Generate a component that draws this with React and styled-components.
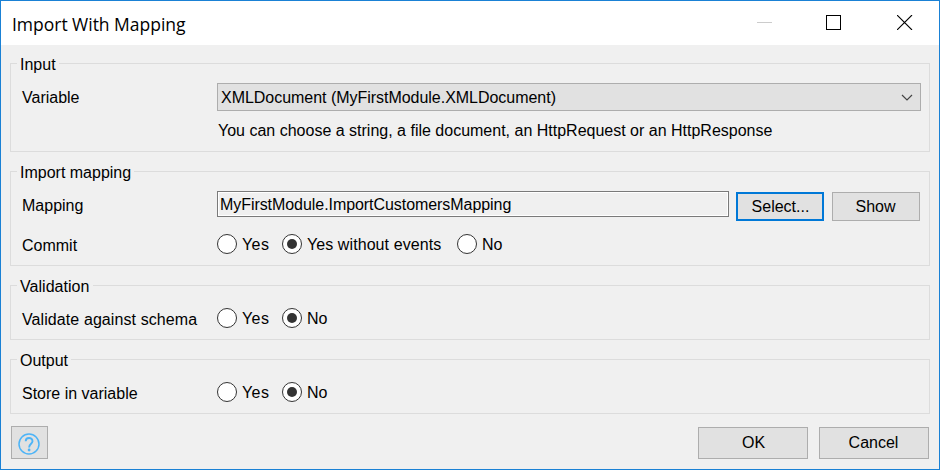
import React from "react";
import styled, { createGlobalStyle } from "styled-components";

const GlobalStyle = createGlobalStyle`
  * { box-sizing: border-box; }
  body { margin: 0; }
`;

const Window = styled.div`
  display: flex;
  flex-direction: column;
  width: 940px;
  height: 470px;
  border: 1px solid #1a81d5;
  background: #f0f0f0;
  color: #000;
  font: 16px/20px "Liberation Sans", Arial, sans-serif;
  white-space: nowrap;
`;

const TitleBar = styled.header`
  display: flex;
  align-items: center;
  justify-content: space-between;
  height: 44px;
  padding: 0 26px 0 11px;
  background: #fff;
`;

const Title = styled.h1`
  margin: 1px 0 0;
  font: 400 17.5px/24px "Open Sans", "Segoe UI", sans-serif;
  letter-spacing: -0.02px;
`;

const WindowControls = styled.div`
  display: flex;
  gap: 54px;
  margin-bottom: 1px;

  svg { display: block; }
  svg:last-child { margin-left: 2px; }
`;

const Body = styled.main`
  display: flex;
  flex-direction: column;
  gap: 19px;
  padding: 18px 9px 0;
`;

const Group = styled.section`
  height: ${(p) => p.$height}px;
  border: 1px solid #dcdcdc;
`;

const GroupTitle = styled.h2`
  width: fit-content;
  height: 20px;
  margin: -9px 0 0 6px;
  padding: 0 3px;
  background: #f0f0f0;
  font-size: 16px;
  font-weight: 400;
  letter-spacing: ${(p) => p.$spacing || 0}px;
`;

const Row = styled.div`
  display: grid;
  grid-template-columns: 195px 1fr;
  height: 29px;
  margin-top: ${(p) => p.$top || 0}px;
  padding: 0 8px 0 11px;
`;

const Label = styled.span`
  line-height: ${(p) => p.$line || 27}px;
  letter-spacing: ${(p) => p.$spacing || 0}px;
`;

const OptionText = styled.span`
  line-height: 22px;
  letter-spacing: ${(p) => p.$spacing || 0}px;
`;

const Select = styled.div`
  display: flex;
  align-items: center;
  justify-content: space-between;
  height: 28px;
  padding: 1px 7px 0 3px;
  border: 1px solid #adadad;
  background: #e1e1e1;
  line-height: 21px;
  letter-spacing: -0.03px;
`;

const Hint = styled.p`
  margin: 9px 0 0 207px;
`;

const FieldRow = styled.div`
  display: flex;
  align-items: flex-start;
  gap: 8px;
`;

const ReadOnlyField = styled.div`
  width: 512px;
  height: 26px;
  margin: -1px -1px 0 0;
  padding-left: 2px;
  border: 1px solid #7a7a7a;
  box-shadow: inset 0 0 0 1px #fff;
  line-height: 26px;
  letter-spacing: -0.06px;
`;

const Button = styled.button`
  display: flex;
  align-items: center;
  justify-content: center;
  width: ${(p) => p.$width}px;
  height: ${(p) => p.$height}px;
  padding: 0 1px 0 0;
  border: 1px solid #adadad;
  background: #e1e1e1;
  color: #000;
  font: inherit;
`;

const DefaultButton = styled(Button)`
  padding: 0 0 0 1px;
  border: 2px solid #0078d7;
`;

const OkButton = styled(Button)`
  padding: 0 0 0 1px;
`;

const HelpButton = styled(Button)`
  padding: 2px 2px 0 0;
`;

const Options = styled.div`
  display: flex;
  height: 20px;
  margin-top: ${(p) => p.$top}px;
`;

const Option = styled.label`
  display: flex;
  gap: 5px;
  width: ${(p) => p.$width}px;
`;

const RadioMark = styled.svg`
  flex: none;
  width: 20px;
  height: 20px;
`;

const Footer = styled.footer`
  display: flex;
  align-items: flex-end;
  gap: 11px;
  height: 45px;
  padding: 0 10px;
`;

const Spacer = styled.div`
  flex: 1;
`;

function Radio({ checked, width, spacing, children }) {
  return (
    <Option $width={width}>
      <RadioMark viewBox="0 0 20 20">
        <circle cx="10" cy="10" r="9.5" fill="#fff" stroke="#333" />
        {checked && <circle cx="10" cy="10" r="5" fill="#333" />}
      </RadioMark>
      <OptionText $spacing={spacing}>{children}</OptionText>
    </Option>
  );
}

export default function App() {
  return (
    <>
      <GlobalStyle />
      <Window>
        <TitleBar>
          <Title>Import With Mapping</Title>
          <WindowControls>
            <svg width="15" height="15" shapeRendering="crispEdges">
              <path d="M0 7.5H15" stroke="#ccc" />
            </svg>
            <svg width="15" height="15" shapeRendering="crispEdges">
              <rect x=".5" y=".5" width="14" height="14" fill="none" stroke="#000" />
            </svg>
            <svg width="16" height="15">
              <path d="M0 0L15 15M15 0L0 15" stroke="#000" strokeWidth="1.1" />
            </svg>
          </WindowControls>
        </TitleBar>
        <Body>
          <Group $height={89}>
            <GroupTitle>Input</GroupTitle>
            <Row $top={8}>
              <Label $line={29}>Variable</Label>
              <Select>
                XMLDocument (MyFirstModule.XMLDocument)
                <svg width="12" height="8" viewBox="0 0 12 8">
                  <path d="M1 1L6 6L11 1" fill="none" stroke="#444" strokeWidth="1.2" />
                </svg>
              </Select>
            </Row>
            <Hint>You can choose a string, a file document, an HttpRequest or an HttpResponse</Hint>
          </Group>
          <Group $height={95}>
            <GroupTitle>Import mapping</GroupTitle>
            <Row $top={9}>
              <Label>Mapping</Label>
              <FieldRow>
                <ReadOnlyField>MyFirstModule.ImportCustomersMapping</ReadOnlyField>
                <DefaultButton $width={88} $height={29}>Select...</DefaultButton>
                <Button $width={88} $height={29}>Show</Button>
              </FieldRow>
            </Row>
            <Row $top={10}>
              <Label $line={29}>Commit</Label>
              <Options $top={3}>
                <Radio width={65} spacing={0.4}>Yes</Radio>
                <Radio width={175} spacing={0.08} checked>Yes without events</Radio>
                <Radio>No</Radio>
              </Options>
            </Row>
          </Group>
          <Group $height={55}>
            <GroupTitle $spacing={0.04}>Validation</GroupTitle>
            <Row $top={9}>
              <Label $spacing={0.09}>Validate against schema</Label>
              <Options $top={2}>
                <Radio width={65} spacing={0.4}>Yes</Radio>
                <Radio checked>No</Radio>
              </Options>
            </Row>
          </Group>
          <Group $height={55}>
            <GroupTitle>Output</GroupTitle>
            <Row $top={9}>
              <Label>Store in variable</Label>
              <Options $top={2}>
                <Radio width={65} spacing={0.4}>Yes</Radio>
                <Radio checked>No</Radio>
              </Options>
            </Row>
          </Group>
        </Body>
        <Footer>
          <HelpButton $width={37} $height={33}>
            <svg width="22" height="22" viewBox="0 0 22 22" fill="none" stroke="#4db4f7">
              <circle cx="11" cy="11" r="10" strokeWidth="1.5" />
              <path d="M7.7 8.3C7.7 3.9 14.5 3.9 14.5 8.2C14.5 10.7 11.1 10.8 11.1 14.4" strokeWidth="1.9" />
              <circle cx="11.1" cy="17" r="1.4" fill="#4db4f7" stroke="none" />
            </svg>
          </HelpButton>
          <Spacer />
          <OkButton $width={110} $height={32}>OK</OkButton>
          <Button $width={110} $height={32}>Cancel</Button>
        </Footer>
      </Window>
    </>
  );
}
